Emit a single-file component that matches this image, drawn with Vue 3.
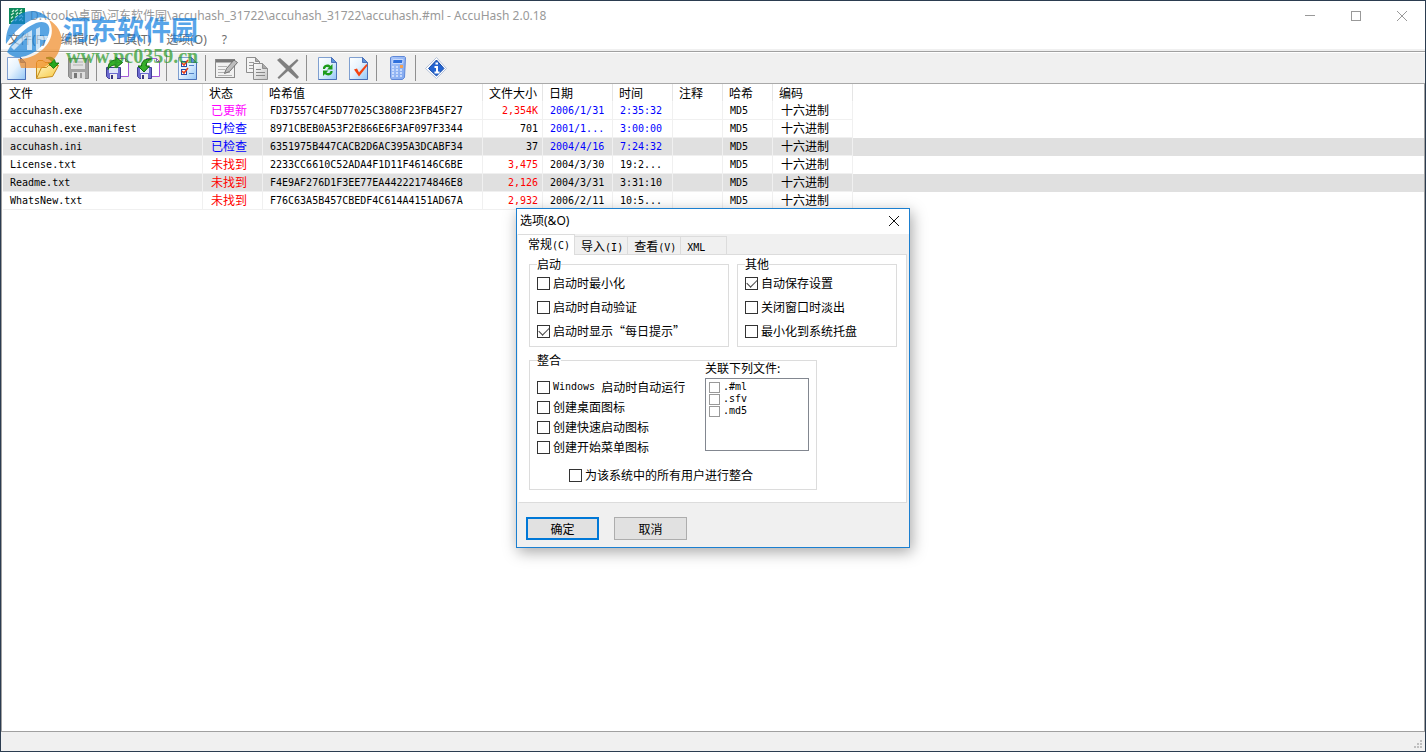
<script setup>
import { ref } from 'vue'

const columns = [
  { name: '文件', cls: 'c-file' },
  { name: '状态', cls: 'c-status' },
  { name: '哈希值', cls: 'c-hash' },
  { name: '文件大小', cls: 'c-size' },
  { name: '日期', cls: 'c-date' },
  { name: '时间', cls: 'c-time' },
  { name: '注释', cls: 'c-note' },
  { name: '哈希', cls: 'c-algo' },
  { name: '编码', cls: 'c-enc' },
]

const files = [
  { file: 'accuhash.exe', status: '已更新', tone: 'magenta', hash: 'FD37557C4F5D77025C3808F23FB45F27', size: '2,354K', sizeTone: 'red', date: '2006/1/31', time: '2:35:32', dateTone: 'blue' },
  { file: 'accuhash.exe.manifest', status: '已检查', tone: 'blue', hash: '8971CBEB0A53F2E866E6F3AF097F3344', size: '701', sizeTone: '', date: '2001/1...', time: '3:00:00', dateTone: 'blue' },
  { file: 'accuhash.ini', status: '已检查', tone: 'blue', hash: '6351975B447CACB2D6AC395A3DCABF34', size: '37', sizeTone: '', date: '2004/4/16', time: '7:24:32', dateTone: 'blue', shaded: true },
  { file: 'License.txt', status: '未找到', tone: 'red', hash: '2233CC6610C52ADA4F1D11F46146C6BE', size: '3,475', sizeTone: 'red', date: '2004/3/30', time: '19:2...', dateTone: '' },
  { file: 'Readme.txt', status: '未找到', tone: 'red', hash: 'F4E9AF276D1F3EE77EA44222174846E8', size: '2,126', sizeTone: 'red', date: '2004/3/31', time: '3:31:10', dateTone: '', shaded: true },
  { file: 'WhatsNew.txt', status: '未找到', tone: 'red', hash: 'F76C63A5B457CBEDF4C614A4151AD67A', size: '2,932', sizeTone: 'red', date: '2006/2/11', time: '10:5...', dateTone: '' },
]

const menus = ['文件(F)', '编辑(E)', '工具(T)', '选项(O)', '?']

const tabs = [
  { cjk: '常规', latin: '(C)' },
  { cjk: '导入', latin: '(I)' },
  { cjk: '查看', latin: '(V)' },
  { cjk: '', latin: 'XML' },
]
const activeTab = ref(0)

const startup = ref([
  { label: '启动时最小化', on: false },
  { label: '启动时自动验证', on: false },
  { label: '启动时显示“每日提示”', on: true },
])
const others = ref([
  { label: '自动保存设置', on: true },
  { label: '关闭窗口时淡出', on: false },
  { label: '最小化到系统托盘', on: false },
])
const integration = ref([
  { latin: 'Windows ', label: '启动时自动运行', on: false },
  { latin: '', label: '创建桌面图标', on: false },
  { latin: '', label: '创建快速启动图标', on: false },
  { latin: '', label: '创建开始菜单图标', on: false },
])
const allUsers = ref(false)
const extensions = ref([
  { label: '.#ml', on: false },
  { label: '.sfv', on: false },
  { label: '.md5', on: false },
])
</script>

<template>
  <div class="window">
    <header class="titlebar">
      <svg class="app-icon" viewBox="0 0 16 16" aria-hidden="true">
        <rect width="16" height="16" fill="#0d8a5c" />
        <path d="M3 4l2-2M6 3.500l3-2M11 3l2-1.500M2 7l3-2M7 6.500l2-2M10 6l3-2M2 10.500l2-2M6 9.500l3-2M10 9l3-2M2 14l3-2M6 13l2-2M10 12.500l3-2M13 13l1-1M13 9l1-1" stroke="#c9ecd9" stroke-width="1.300" />
      </svg>
      <h1 class="title">D:\tools\桌面\河东软件园\accuhash_31722\accuhash_31722\accuhash.#ml - AccuHash 2.0.18</h1>
      <div class="caption-buttons">
        <button type="button" aria-label="最小化"><svg viewBox="0 0 12 12"><path d="M1 5.500h10" /></svg></button>
        <button type="button" aria-label="最大化"><svg viewBox="0 0 12 12"><rect x="1.500" y="1.500" width="9" height="9" /></svg></button>
        <button type="button" aria-label="关闭"><svg viewBox="0 0 12 12"><path d="M1 1l10 10M11 1L1 11" /></svg></button>
      </div>
    </header>

    <nav class="menubar">
      <button v-for="m in menus" :key="m" type="button">{{ m }}</button>
    </nav>

    <svg class="defs" aria-hidden="true">
      <defs>
        <linearGradient id="page" x1="0" y1="0" x2="1" y2="1">
          <stop offset="0" stop-color="#ffffff" />
          <stop offset="0.45" stop-color="#e6f3fe" />
          <stop offset="1" stop-color="#93c6f6" />
        </linearGradient>
        <linearGradient id="folder" x1="0" y1="0" x2="1" y2="1">
          <stop offset="0" stop-color="#fff6c4" />
          <stop offset="1" stop-color="#f8c63c" />
        </linearGradient>
        <linearGradient id="calc" x1="0" y1="0" x2="1" y2="1">
          <stop offset="0" stop-color="#a9c6fa" />
          <stop offset="1" stop-color="#7fa6ee" />
        </linearGradient>
        <linearGradient id="grey" x1="0" y1="0" x2="1" y2="1">
          <stop offset="0" stop-color="#ffffff" />
          <stop offset="1" stop-color="#c4c4c4" />
        </linearGradient>
        <symbol id="sheet" viewBox="0 0 24 24">
          <path d="M3.500 1.500h13l5 5v17h-18z" fill="url(#page)" stroke="#7f9fd0" />
          <path d="M3.500 23.500h18v-17" fill="none" stroke="#4a70b8" />
          <path d="M16.500 1.500v5h5z" fill="#5b93dc" stroke="#4a70b8" />
        </symbol>
        <symbol id="disk" viewBox="0 0 24 24">
          <path d="M10.500 2.500h10l3 3v15h-13z" fill="#fff" stroke="#a45bd8" />
          <path d="M20.500 2.500v3h3" fill="none" stroke="#7c6a92" />
          <path d="M1.500 11.500h14v11h-12l-2-2z" fill="#6d6bd0" stroke="#3f3c93" />
          <rect x="4" y="12" width="9" height="5" fill="#dfe6f8" />
          <rect x="5" y="18" width="7" height="5" fill="#eee" />
          <rect x="6" y="19" width="2" height="4" fill="#38357e" />
        </symbol>
      </defs>
    </svg>

    <div class="toolbar" role="toolbar">
      <button type="button" aria-label="新建">
        <svg viewBox="0 0 24 24"><use href="#sheet" /></svg>
      </button>
      <button type="button" aria-label="打开">
        <svg viewBox="0 0 24 24">
          <path d="M1.500 22V6.500L3 4.500h5l2 2h8v4" fill="url(#folder)" stroke="#c48a1a" />
          <path d="M1.500 22.500l5-11h5l2-2h10l-6 11z" fill="url(#folder)" stroke="#c48a1a" />
          <path d="M11 2c5-2 9 0 9.500 5h3.500L18.500 12.500 13 7h4c0-2.500-2-4-6-5z" fill="#27a81f" stroke="#0b6b0b" stroke-width=".8" />
        </svg>
      </button>
      <button type="button" aria-label="保存" disabled>
        <svg viewBox="0 0 24 24">
          <path d="M2.500 2.500h19l1 1v19H4.500l-2-2z" fill="#a3a3a3" stroke="#8a8a8a" />
          <rect x="5" y="3" width="14" height="10" fill="#e2e2e2" />
          <path d="M7 6h10M7 9h10" stroke="#b0b0b0" />
          <rect x="6" y="16" width="13" height="7" fill="#dedede" />
          <rect x="8" y="17" width="3" height="5" fill="#777" />
          <path d="M15 17v5" stroke="#999" stroke-width="2" />
        </svg>
      </button>
      <span class="sep"></span>
      <button type="button" aria-label="导出">
        <svg viewBox="0 0 24 24">
          <use href="#disk" />
          <path d="M3 13.500C3 7 6 4 11 4V1l6.500 5.500L11 12V9C7.500 9 5 10 3 13.500z" fill="#35b02a" stroke="#0a650a" />
        </svg>
      </button>
      <button type="button" aria-label="导入">
        <svg viewBox="0 0 24 24">
          <use href="#disk" />
          <path d="M15.500 3C9 2.500 5.500 5 5.500 10H2l6 6 5.500-6H10c0-3 2-5.500 5.500-7z" fill="#35b02a" stroke="#0a650a" />
        </svg>
      </button>
      <span class="sep"></span>
      <button type="button" aria-label="选项">
        <svg viewBox="0 0 24 24">
          <use href="#sheet" />
          <rect x="6.500" y="5.500" width="5" height="5" fill="#fff" stroke="#254ba8" />
          <rect x="6.500" y="13.500" width="5" height="5" fill="#fff" stroke="#254ba8" />
          <path d="M7 7l2 2 4-5M7 15l2 2 4-5" fill="none" stroke="#e8401a" stroke-width="1.600" />
          <path d="M14 9.500h5M14 17.500h5" stroke="#5280c6" />
        </svg>
      </button>
      <span class="sep"></span>
      <button type="button" aria-label="编辑" disabled>
        <svg viewBox="0 0 24 24">
          <rect x="1.500" y="3.500" width="19" height="18" fill="#f1f1f1" stroke="#8b8b8b" />
          <path d="M2 5h19" stroke="#777" stroke-width="3" />
          <path d="M4 10.500h9M4 13.500h7M4 16.500h12M4 19.500h14" stroke="#b2b2b2" />
          <path d="M10.500 17.500l2-5L20 4l3.500 2.500-8 9z" fill="#bdbdbd" stroke="#707070" />
        </svg>
      </button>
      <button type="button" aria-label="复制" disabled>
        <svg viewBox="0 0 24 24">
          <path d="M1.500 1.500h9l4 4v11h-13z" fill="#f4f4f4" stroke="#8d8d8d" />
          <path d="M10.500 1.500v4h4" fill="#aaa" stroke="#8d8d8d" />
          <path d="M4 6.500h5M4 9.500h7M4 12.500h7" stroke="#999" />
          <path d="M8.500 7.500h9l5 5v11h-14z" fill="url(#grey)" stroke="#8d8d8d" />
          <path d="M17.500 7.500v5h5" fill="#aaa" stroke="#8d8d8d" />
          <path d="M11 13.500h5M11 16.500h9M11 19.500h9" stroke="#888" />
        </svg>
      </button>
      <button type="button" aria-label="删除" disabled>
        <svg viewBox="0 0 24 24">
          <path d="M1 4l3-2 9 8 8-7 1.500 1.500L15 12l8 9-2 2-9-8-9 8-1.500-1.500L10 13z" fill="#808080" />
        </svg>
      </button>
      <span class="sep"></span>
      <button type="button" aria-label="刷新">
        <svg viewBox="0 0 24 24">
          <use href="#sheet" />
          <path d="M8 13v-1.500c1-3 5.500-4 7.500-1.500l2-2v5.500h-5.500l2-2c-1.500-1-3.500-1-4 1.500z" fill="#1c9c1c" />
          <path d="M17.500 15v1.500c-1 3-5.500 4-7.500 1.500l-2 2v-5.500h5.500l-2 2c1.500 1 3.500 1 4-1.500z" fill="#1c9c1c" />
        </svg>
      </button>
      <button type="button" aria-label="验证">
        <svg viewBox="0 0 24 24">
          <use href="#sheet" />
          <path d="M8 13.500l3-1 2 4L20.500 8l1 1.500-8.500 11z" fill="#f5430f" />
        </svg>
      </button>
      <span class="sep"></span>
      <button type="button" aria-label="计算器">
        <svg viewBox="0 0 24 24">
          <path d="M5.500 1.500l2-1h12l1 1-1 20-2 2h-11l-1-2z" fill="url(#calc)" stroke="#5f88d8" />
          <path d="M8 3.500h10l-.5 4h-10z" fill="#2f70dd" stroke="#c8dafc" />
          <path d="M7 11h2M11 11h2M7 14h2M11 14h2M15 14h2M7 17h2M11 17h2M15 17h2M7 20h2M11 20h2M15 20h2" stroke="#dbe8ff" stroke-width="1.500" />
          <path d="M15 10.500h3" stroke="#f3a253" stroke-width="3" />
        </svg>
      </button>
      <span class="sep"></span>
      <button type="button" aria-label="关于">
        <svg viewBox="0 0 24 24">
          <path d="M12.500 1.500l10 11-10 10-11-10z" fill="#fff" stroke="#b4c2da" />
          <path d="M12.500 4l7.500 8.500-7.500 7.500-8-7.500z" fill="#2464d0" stroke="#164aa6" />
          <path d="M11.500 7.500h2.500M10.500 11h2.500v5.500M10.500 16.500h5" fill="none" stroke="#fff" stroke-width="2" />
        </svg>
      </button>
    </div>

    <main class="list">
      <table>
        <colgroup>
          <col v-for="c in columns" :key="c.cls" :class="c.cls" />
          <col />
        </colgroup>
        <thead>
          <tr>
            <th v-for="c in columns" :key="c.cls" :class="c.cls" scope="col">{{ c.name }}</th>
            <td class="rest"></td>
          </tr>
        </thead>
        <tbody>
          <tr v-for="f in files" :key="f.file" :class="{ shaded: f.shaded }">
            <td class="latin">{{ f.file }}</td>
            <td :class="f.tone">{{ f.status }}</td>
            <td class="latin">{{ f.hash }}</td>
            <td class="latin num" :class="f.sizeTone">{{ f.size }}</td>
            <td class="latin" :class="f.dateTone">{{ f.date }}</td>
            <td class="latin" :class="f.dateTone">{{ f.time }}</td>
            <td></td>
            <td class="latin">MD5</td>
            <td>十六进制</td>
            <td class="rest"></td>
          </tr>
        </tbody>
      </table>
    </main>

    <footer class="statusbar">
      <svg viewBox="0 0 12 12" aria-hidden="true">
        <path d="M7 2h2M4 5h2M7 5h2M1 8h2M4 8h2M7 8h2" stroke="#bfbfbf" stroke-width="2" />
      </svg>
    </footer>

    <div class="watermark" aria-hidden="true">
      <svg viewBox="0 0 58 58">
        <path d="M44 10C55 16 59 28 55 38C52 49 44 55 37 58H16l-3-9c9 0 17-3 24-9 9-8 13-19 7-30z" fill="#f08a24" />
        <path d="M1 34C0 15 12 1 27 1c8 0 14 4 18 9-5-3-11-3-16-1C18 13 9 22 1 34z" fill="#1380d8" />
        <path d="M2 42C9 29 19 18 31 13c10-3 15 2 13 10-3 12-15 22-28 24-6 1-10-1-14-5z" fill="#1380d8" />
        <path d="M6 37l13-12 8-5v20h-5V27l-13 13zM31 19l4-2v9h8l-2 4h-6v10h-4z" fill="#fff" opacity=".7" />
      </svg>
      <div class="wm-text">
        <span class="wm-name">河东软件园</span>
        <span class="wm-url">www.pc0359.cn</span>
      </div>
    </div>

    <section class="dialog" role="dialog" aria-labelledby="dlg-title">
      <header class="dlg-title">
        <h2 id="dlg-title">选项(&amp;O)</h2>
        <button type="button" aria-label="关闭"><svg viewBox="0 0 12 12"><path d="M1 1l10 10M11 1L1 11" /></svg></button>
      </header>
      <div class="tabs" role="tablist">
        <button
          v-for="(t, i) in tabs"
          :key="t.latin"
          type="button"
          role="tab"
          :aria-selected="i === activeTab"
          :class="{ active: i === activeTab }"
          @click="activeTab = i"
        >{{ t.cjk }}<span class="latin">{{ t.latin }}</span></button>
      </div>
      <div class="panel" role="tabpanel">
        <div class="group-row">
          <fieldset class="g-start">
            <legend>启动</legend>
            <label v-for="o in startup" :key="o.label" class="check"><input v-model="o.on" type="checkbox" />{{ o.label }}</label>
          </fieldset>
          <fieldset class="g-other">
            <legend>其他</legend>
            <label v-for="o in others" :key="o.label" class="check"><input v-model="o.on" type="checkbox" />{{ o.label }}</label>
          </fieldset>
        </div>
        <fieldset class="g-integration">
          <legend>整合</legend>
          <div class="split">
            <div class="left">
              <label v-for="o in integration" :key="o.label" class="check tight"><input v-model="o.on" type="checkbox" /><span v-if="o.latin" class="latin">{{ o.latin }}</span>{{ o.label }}</label>
            </div>
            <div class="right">
              <span id="ext-label" class="ext-label">关联下列文件:</span>
              <div class="ext-list" role="group" aria-labelledby="ext-label">
                <label v-for="e in extensions" :key="e.label" class="latin"><input v-model="e.on" type="checkbox" />{{ e.label }}</label>
              </div>
            </div>
          </div>
          <label class="check tight all"><input v-model="allUsers" type="checkbox" />为该系统中的所有用户进行整合</label>
        </fieldset>
      </div>
      <div class="actions">
        <button type="button" class="primary">确定</button>
        <button type="button">取消</button>
      </div>
    </section>
  </div>
</template>

<style>
html,
body,
#app {
  height: 100%;
}
</style>

<style scoped>
* {
  box-sizing: border-box;
}
.window {
  position: relative;
  display: flex;
  flex-direction: column;
  min-height: 100%;
  border: 1px solid #2b3c50;
  background: #fff;
  color: #000;
  font: 12px/16px "Noto Sans CJK SC", sans-serif;
  overflow: hidden;
}
button {
  font: inherit;
  color: inherit;
  padding: 0;
  margin: 0;
  border: 0;
  background: none;
}
h1,
h2 {
  margin: 0;
  font: inherit;
}
.latin {
  font-family: "DejaVu Sans Mono", "Liberation Mono", monospace;
  font-size: 10px;
  white-space: pre;
}
.defs {
  position: absolute;
  width: 0;
  height: 0;
}

.titlebar {
  display: flex;
  align-items: center;
  height: 29px;
  padding-left: 8px;
}
.app-icon {
  width: 16px;
  height: 16px;
  margin-right: 5px;
}
.title {
  flex: 1;
  color: #999;
  font-family: "Noto Sans", "Noto Sans CJK SC", sans-serif;
  white-space: nowrap;
}
.caption-buttons {
  display: flex;
}
.caption-buttons button {
  width: 46px;
  height: 29px;
}
.caption-buttons svg,
.dlg-title svg {
  display: block;
  width: 12px;
  height: 12px;
  margin: 0 auto;
  fill: none;
  stroke: #999;
}

.menubar {
  display: flex;
  gap: 15px;
  height: 19px;
  padding-left: 7px;
  color: #6d6d6d;
  font-family: "Noto Sans", "Noto Sans CJK SC", sans-serif;
}
.menubar button {
  height: 20px;
  line-height: 20px;
}

.toolbar {
  display: flex;
  align-items: center;
  height: 35px;
  padding-top: 3px;
  border-bottom: 1px solid #a9a9a9;
  background: linear-gradient(#f0f0f0 2px, #a0a0a0 2px, #a0a0a0 3px, #fff 3px, #fff 4px, #f0f0f0 4px);
}
.toolbar button {
  width: 31px;
  height: 28px;
  padding-right: 2px;
}
.toolbar svg {
  width: 24px;
  height: 24px;
  vertical-align: middle;
}
.sep {
  width: 8px;
  height: 26px;
  border-left: 1px solid #909090;
  margin-left: 2px;
  margin-right: -2px;
}

.list {
  flex: 1;
  border: solid #a0a0a0;
  border-width: 0 1px 0 1px;
  padding-left: 1px;
}
table {
  width: 100%;
  table-layout: fixed;
  border-collapse: separate;
  border-spacing: 0;
}
col.c-file { width: 200px; }
col.c-status { width: 60px; }
col.c-hash { width: 220px; }
col.c-size { width: 60px; }
col.c-date { width: 70px; }
col.c-time { width: 60px; }
col.c-note { width: 50px; }
col.c-algo { width: 50px; }
col.c-enc { width: 80px; }
th,
td {
  height: 18px;
  padding: 0 0 0 8px;
  border-right: 1px solid #f0f0f0;
  border-bottom: 1px solid #f0f0f0;
  line-height: 17px;
  font-weight: 400;
  text-align: left;
  white-space: nowrap;
}
th {
  padding-left: 6px;
  border-color: #e5e5e5;
  border-bottom-color: transparent;
}
td {
  padding-bottom: 2px;
  line-height: 15px;
}
td.latin {
  padding-bottom: 0;
  padding-left: 7px;
  line-height: 17px;
}
td.num {
  padding-right: 4px;
  text-align: right;
}
td.rest {
  border: 0;
}
.shaded {
  background: #e0e0e0;
}
.red { color: #f00; }
.blue { color: #00f; }
.magenta { color: #f0f; }

.statusbar {
  display: flex;
  justify-content: flex-end;
  align-items: flex-end;
  height: 20px;
  border-top: 1px solid #a0a0a0;
  background: #f0f0f0;
}
.statusbar svg {
  width: 12px;
  height: 12px;
}

.watermark {
  position: absolute;
  top: 9px;
  left: 4px;
  display: flex;
  opacity: 0.7;
  pointer-events: none;
}
.watermark svg {
  width: 58px;
  height: 58px;
}
.wm-text {
  display: flex;
  flex-direction: column;
  padding-top: 4px;
}
.wm-name {
  color: #1180e0;
  font-size: 27px;
  font-weight: 700;
  line-height: 30px;
}
.wm-url {
  color: #2a9a2a;
  font: 700 20px/24px "Liberation Serif", serif;
  padding-left: 3px;
}

.dialog {
  position: absolute;
  top: 207px;
  left: 50%;
  width: 394px;
  transform: translateX(-50%);
  border: 1px solid #1b7fd0;
  background: #f0f0f0;
  box-shadow: 2px 4px 14px rgba(0, 0, 0, 0.35);
}
.dlg-title {
  display: flex;
  justify-content: space-between;
  align-items: center;
  height: 25px;
  padding: 0 9px 1px 3px;
  background: #fff;
  font-family: "Noto Sans", "Noto Sans CJK SC", sans-serif;
}
.dlg-title svg {
  stroke: #111;
}
.tabs {
  display: flex;
  align-items: flex-end;
  height: 21px;
  padding-left: 1px;
}
.tabs button {
  height: 19px;
  padding: 0 4px 0 6px;
  border: 1px solid #dcdcdc;
  border-width: 1px 1px 0 0;
  line-height: 17px;
}
.tabs button.active {
  position: relative;
  z-index: 1;
  height: 21px;
  padding: 0 4px 2px 10px;
  background: #fff;
}
.tabs button:last-child {
  padding-right: 21px;
}
.panel {
  margin: -1px 2px 0 1px;
  padding: 3px 9px 12px 10px;
  border: 1px solid #dcdcdc;
  border-left-color: #fff;
  background: #fff;
}
.group-row {
  display: flex;
  gap: 8px;
  margin-bottom: 7px;
}
fieldset {
  min-width: 0;
  margin: 0;
  padding: 1px 7px 3px 7px;
  border: 1px solid #dcdcdc;
}
legend {
  padding: 0;
  line-height: 12px;
}
.g-start { width: 200px; }
.g-other { flex: 1; }
.g-integration {
  width: 288px;
  padding: 0 7px 4px 7px;
}
.check {
  display: flex;
  align-items: center;
  height: 24px;
  white-space: nowrap;
}
.check.tight {
  height: 20px;
}
.check.all {
  margin: 8px 0 0 32px;
}
input {
  appearance: none;
  flex: none;
  display: grid;
  place-items: center;
  width: 13px;
  height: 13px;
  margin: 0 3px 0 0;
  border: 1px solid #333;
  background: #fff;
}
input:checked::after {
  content: "";
  width: 9px;
  height: 5px;
  margin-top: -3px;
  border: solid #444;
  border-width: 0 0 1px 1px;
  transform: rotate(-45deg);
}
.split {
  display: flex;
  justify-content: space-between;
}
.left {
  padding-top: 11px;
}
.right {
  width: 104px;
  margin-top: -6px;
}
.ext-label {
  display: block;
  margin-bottom: 2px;
}
.ext-list {
  height: 73px;
  padding: 2px 3px;
  border: 1px solid #828790;
}
.ext-list label {
  display: flex;
  align-items: center;
  height: 12px;
}
.ext-list input {
  width: 11px;
  height: 11px;
  border-color: #999;
}
.actions {
  display: flex;
  gap: 15px;
  padding: 14px 9px 7px 9px;
}
.actions button {
  width: 73px;
  height: 23px;
  border: 1px solid #adadad;
  background: #e1e1e1;
  line-height: 19px;
}
.actions button.primary {
  border: 2px solid #0078d7;
}
</style>
